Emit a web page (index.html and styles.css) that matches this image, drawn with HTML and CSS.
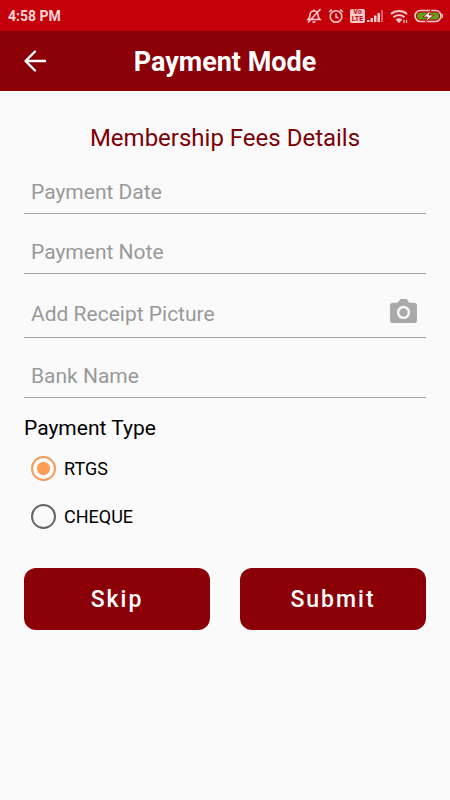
FILE: index.html
```html
<!DOCTYPE html>
<html lang="en">
<head>
  <meta charset="utf-8">
  <meta name="viewport" content="width=device-width, initial-scale=1">
  <title>Payment Mode</title>
  <link rel="stylesheet" href="styles.css">
</head>
<body>
  <div class="statusbar">
    <span class="clock">4:58 PM</span>
    <div class="status-icons">
      <!-- muted bell -->
      <svg width="16" height="16" viewBox="0 0 16 16" fill="none" stroke="#ffc9c9" stroke-width="1.6">
        <path d="M2 11.500h12c-1.500-1.500-2-2.500-2-4.500 0-2.500-1.500-4-4-4s-4 1.500-4 4c0 2-.5 3-2 4.500zM8 3V1.500M6.500 14h3M14.500 1L2 14.500"/>
      </svg>
      <!-- alarm -->
      <svg width="16" height="16" viewBox="0 0 16 16" fill="none" stroke="#ffc9c9" stroke-width="1.500">
        <circle cx="8" cy="8.500" r="5.800"/>
        <path d="M8 5.500V9l2.500 1M1 4l3-2.500M15 4l-3-2.500"/>
      </svg>
      <div class="volte"><span>Vo</span><span>LTE</span></div>
      <!-- mobile signal -->
      <svg class="signal" width="17" height="14" viewBox="0 0 17 14" fill="#ffc9c9">
        <path d="M0 11h2.500v2H0zM3.500 9H6v4H3.500zM7 6.500h2.500V13H7zM10.500 4H13v9h-2.500z"/>
        <path d="M14 1h2v12h-2z" opacity=".45"/>
      </svg>
      <!-- wifi -->
      <svg class="wifi" width="18" height="14" viewBox="0 0 18 14" fill="none" stroke="#ffc9c9" stroke-width="1.900">
        <path d="M1 5c4.500-4 11.500-4 16 0M3.500 8.200c3-2.800 8-2.800 11 0"/>
        <path d="M5.500 10.500q3.500-2.500 7 0L9 14z" fill="#ffc9c9" stroke="none"/>
        <path d="M14 11v3M16.500 11v3" stroke-width="1.200"/>
      </svg>
      <!-- charging battery -->
      <svg width="29" height="14" viewBox="0 0 29 14">
        <rect x="1" y="1.500" width="26" height="11" rx="5.500" fill="none" stroke="#ffc9c9" stroke-width="1.600"/>
        <rect x="3" y="3.500" width="22" height="7" rx="3.500" fill="#58a618"/>
        <path d="M17 1L9 8h4.500L11.500 13l8.500-7h-5z" fill="#fff" stroke="#c30009" stroke-width=".9"/>
        <path d="M28.500 5v4" stroke="#ffc9c9"/>
      </svg>
    </div>
  </div>

  <header class="appbar">
    <button type="button" class="back" aria-label="Back">
      <svg width="24" height="24" viewBox="0 0 24 24" fill="none" stroke="#fff" stroke-width="2.400" stroke-linecap="round" stroke-linejoin="round">
        <path d="M22 12H3M12 2.500L2.500 12l9.500 9.500"/>
      </svg>
    </button>
    <h1>Payment Mode</h1>
  </header>

  <main>
    <h2>Membership Fees Details</h2>
    <form id="payment">
      <div class="field">
        <input type="text" name="date" placeholder="Payment Date" aria-label="Payment Date">
      </div>
      <div class="field">
        <input type="text" name="note" placeholder="Payment Note" aria-label="Payment Note">
      </div>
      <div class="field field-picture">
        <input type="text" name="receipt" placeholder="Add Receipt Picture" aria-label="Add Receipt Picture">
        <button type="button" class="camera" aria-label="Take picture">
          <svg width="27" height="25" viewBox="0 0 28 26">
            <path d="M3 4h5l2-3q.5-1 1.500-1h5q1 0 1.500 1l2 3h5q3 0 3 3v15q0 3-3 3H3q-3 0-3-3V7q0-3 3-3z" fill="#aaa"/>
            <circle cx="14" cy="14" r="5.600" fill="none" stroke="#fafafa" stroke-width="2.600"/>
          </svg>
        </button>
      </div>
      <div class="field">
        <input type="text" name="bank" placeholder="Bank Name" aria-label="Bank Name">
      </div>

      <fieldset>
        <legend>Payment Type</legend>
        <label class="choice"><input type="radio" name="type" value="rtgs" checked>RTGS</label>
        <label class="choice"><input type="radio" name="type" value="cheque">CHEQUE</label>
      </fieldset>

      <div class="actions">
        <button type="button" name="skip">Skip</button>
        <button type="submit" name="submit">Submit</button>
      </div>
    </form>
  </main>
</body>
</html>
```
FILE: styles.css
```css
* { box-sizing:border-box }
body {
  margin:0;
  font-family:Roboto, Arial, sans-serif;
  background:#fafafa;
  color:#000
}
button, input { font-family:inherit }
button { padding:0; border:0; background:none; cursor:pointer }
svg { display:block }

/* status bar */
.statusbar {
  display:flex;
  align-items:center;
  justify-content:space-between;
  height:31px;
  padding:0 7px 0 8px;
  background:#c30009
}
.clock { color:#ffd5d5; font-size:14px; font-weight:bold }
.status-icons { display:flex; align-items:center; gap:6px }
.volte {
  display:flex;
  flex-direction:column;
  width:15px;
  border-radius:2px;
  background:#ffc9c9;
  color:#c30009;
  font-size:7px;
  line-height:7px;
  font-weight:bold;
  text-align:center
}
.signal { margin-left:-4px }

/* title bar */
.appbar {
  display:grid;
  grid-template-columns:24px 1fr 24px;
  align-items:center;
  height:60px;
  padding:0 23px;
  background:#8b0007
}
.appbar h1 {
  margin:0;
  padding-top:2px;
  color:#fff;
  font-size:27px;
  line-height:32px;
  font-weight:bold;
  text-align:center
}

main { padding:31px 24px }
h2 {
  margin:0;
  color:#7c0006;
  font-size:24px;
  line-height:32px;
  font-weight:normal;
  text-align:center
}

.field {
  display:flex;
  align-items:center;
  height:60px;
  padding:16px 9px 0 7px;
  border-bottom:1px solid #a0a0a0
}
.field-picture { height:64px }
.field input {
  flex:1;
  min-width:0;
  padding:0;
  border:0;
  outline:0;
  background:none;
  font-size:21px;
  line-height:28px
}
.field input::placeholder { color:#999; opacity:1 }
.camera { padding-bottom:4px }

fieldset { margin:0; padding:0; border:0 }
legend { padding:16px 0 2px; font-size:21px; line-height:28px }
.choice {
  display:flex;
  align-items:center;
  gap:8px;
  height:48px;
  padding-left:7px;
  font-size:18px
}
.choice input {
  appearance:none;
  width:25px;
  height:25px;
  margin:0;
  border:2px solid #666;
  border-radius:50%
}
.choice input:checked {
  border-color:#f59a58;
  background:radial-gradient(circle, #ff9b52 6px, transparent 7px)
}

.actions { display:flex; gap:30px; padding-top:28px }
.actions button {
  flex:1;
  height:62px;
  border-radius:12px;
  background:#8b0007;
  color:#fff;
  font-size:23px;
  font-weight:500;
  letter-spacing:2px
}
```
